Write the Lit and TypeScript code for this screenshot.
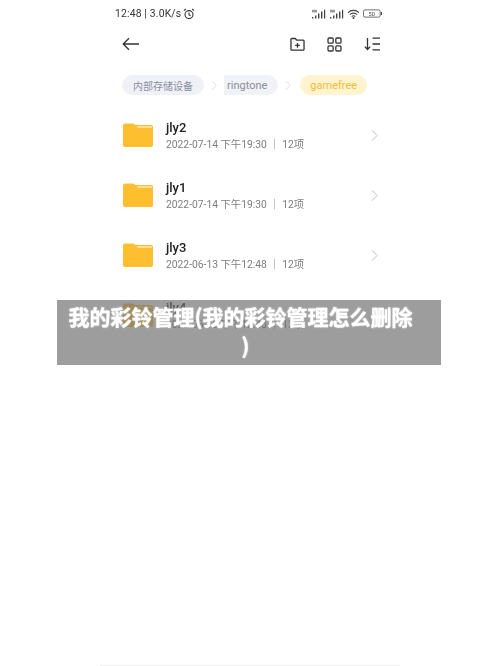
import { LitElement, html, css, svg } from "lit";
import { customElement } from "lit/decorators.js";

const rows = [
  { name: "jly2", meta: "2022-07-14 下午19:30 ｜ 12项" },
  { name: "jly1", meta: "2022-07-14 下午19:30 ｜ 12项" },
  { name: "jly3", meta: "2022-06-13 下午12:48 ｜ 12项" },
  { name: "jly4", meta: "2022-06-13 下午12:48 ｜ 12项" },
];

const folder = html`<svg class="folder" viewBox="0 0 30 24" width="30" height="24">
  <path fill="#fdbf2f" d="M0 2.5A2 2 0 0 1 2 .5h7.5c1.4 0 2 1.6 3.5 1.6H28a2 2 0 0 1 2 2V22a2 2 0 0 1-2 2H2a2 2 0 0 1-2-2Z"/>
  <path fill="#ffe6a8" d="M14.5 3.2H29v1.6H14.5Z"/>
</svg>`;

const chev = (cls: string, w: number, h: number) => html`<svg class=${cls} viewBox="0 0 8 14" width=${w} height=${h} fill="none" stroke="currentColor" stroke-width="1.1"><path d="M1 1l6 6-6 6"/></svg>`;

@customElement("app-root")
export class AppRoot extends LitElement {
  static styles = css`
    :host { display: block; width: 500px; height: 666px; position: relative; overflow: hidden; background: #fff; font-family: Roboto, "Noto Sans CJK SC", sans-serif; }
    .phone { width: 284px; height: 665px; margin: 0 auto; box-sizing: border-box; padding: 0 10px 0 7px; filter: blur(0.35px); }
    .status { height: 27px; display: flex; align-items: center; justify-content: space-between; color: #333; font-size: 10.4px; letter-spacing: 0.15px; }
    .status-left { display: flex; align-items: center; gap: 2px; }
    .status-right { display: flex; align-items: center; gap: 3px; margin-right: -1px; color: #444; }
    .toolbar { height: 34px; display: flex; align-items: center; justify-content: space-between; padding: 0 2px 0 7px; color: #333; }
    .tools { display: flex; align-items: center; gap: 22px; }
    .crumbs { margin-top: 14px; height: 20px; display: flex; align-items: center; padding-left: 7px; font-size: 11px; }
    .pill { height: 20px; display: flex; align-items: center; border-radius: 10px; background: #eff1f7; color: #8a8ea3; padding: 0 11px; font-size: 10px; }
    .pill.mid { border-radius: 0 10px 10px 0; padding: 0 11px 0 3px; background: #f0f2f7; color: #8b8e9b; font-size: 11px; }
    .pill.on { background: #fff4cf; color: #f2bd3a; padding: 0 10px; margin-left: 2px; font-size: 11px; }
    .sep { color: #d8d8de; margin: 0 7px; display: block; }
    .list { margin-top: 11px; padding-left: 8px; }
    .row { height: 60px; display: flex; align-items: center; box-sizing: border-box; padding-bottom: 2px; }
    .folder { flex: none; }
    .text { margin-left: 13px; flex: 1; padding-top: 1px; }
    .name { font-size: 13px; font-weight: 500; line-height: 15px; color: #222; }
    .meta { font-size: 10.3px; line-height: 13px; margin-top: 3px; color: #7d7d7d; white-space: nowrap; }
    .arrow { color: #bdbdbd; margin-right: 4px; flex: none; }
    .rule { position: absolute; left: 100px; width: 300px; bottom: 0; height: 1px; background: #eee; }
    .banner { position: absolute; left: 57px; top: 300px; width: 384px; height: 65px; box-sizing: border-box; background: rgba(110,110,110,0.68); padding: 2px 28px 0 11px; text-align: center; color: #fff; font-family: "Noto Sans CJK SC", sans-serif; font-weight: 700; font-size: 21px; line-height: 29px; text-shadow: 0 0 2px rgba(255,255,255,.7); -webkit-text-stroke: 0.3px #fff; }
    .tail { display: block; padding-left: 10px; }
    .line { display: block; white-space: nowrap; }
  `;

  render() {
    return html`
      <div class="phone">
        <div class="status">
          <div class="status-left">
            <span>12:48 | 3.0K/s</span>
            <svg viewBox="0 0 12 12" width="12" height="12" fill="none" stroke="#333" stroke-width="1.1"><circle cx="6" cy="6.6" r="4"/><path d="M6 4.4v2.4l1.6 1M1 2.6 2.8 1M11 2.6 9.2 1"/></svg>
          </div>
          <div class="status-right">
            ${[0, 1].map(() => html`<svg viewBox="0 0 15 10" width="15" height="10" fill="currentColor">
              <path d="M1 8h1.4v1.4H1ZM4 6.5h1.4v3H4ZM7 4.5h1.4v5H7ZM10 2.5h1.4v7H10ZM13 .8h1.2v8.7H13Z"/>
              <path d="M1 .8h5v2.6H1Z" opacity=".55"/>
            </svg>`)}
            <svg viewBox="0 0 14 11" width="13" height="10" fill="none" stroke="currentColor" stroke-width="1.2"><path d="M1 4a8.5 8.5 0 0 1 12 0M3 6.2a5.6 5.6 0 0 1 8 0M5 8.3a2.8 2.8 0 0 1 4 0"/><circle cx="7" cy="10" r=".5"/></svg>
            <svg viewBox="0 0 21 9" width="20" height="9" fill="none" stroke="currentColor" stroke-width=".8">
              <rect x=".5" y=".7" width="17.5" height="7.6" rx="1.6"/><path d="M19.3 3v3" stroke-width="1.2"/>
              ${svg`<text x="9.2" y="6.8" text-anchor="middle" font-size="6" fill="currentColor" stroke="none" font-family="Roboto">50</text>`}
            </svg>
          </div>
        </div>
        <div class="toolbar">
          <svg viewBox="0 0 17 14" width="17" height="14" fill="none" stroke="currentColor" stroke-width="1.3"><path d="M17 7H1.2M7 1.2 1.2 7 7 12.8"/></svg>
          <div class="tools">
            <svg viewBox="0 0 16 15" width="15" height="14" fill="none" stroke="currentColor" stroke-width="1.4"><path d="M1 2.6a1 1 0 0 1 1-1h3.6l1.6 1.8H14a1 1 0 0 1 1 1V13a1 1 0 0 1-1 1H2a1 1 0 0 1-1-1Z"/><path d="M8 6.4v5M5.5 8.9h5"/></svg>
            <svg viewBox="0 0 15 15" width="15" height="15" fill="none" stroke="currentColor" stroke-width="1.3"><rect x="1" y="1" width="5.2" height="5.2" rx="1.2"/><rect x="8.8" y="1" width="5.2" height="5.2" rx="1.2"/><rect x="1" y="8.8" width="5.2" height="5.2" rx="1.2"/><rect x="8.8" y="8.8" width="5.2" height="5.2" rx="1.2"/></svg>
            <svg viewBox="0 0 16 14" width="16" height="14" fill="none" stroke="currentColor" stroke-width="1.3"><path d="M3.5 1v11.5M.8 9.6l2.7 2.9 2.7-2.9M8.5 1.2H16M8.5 7H16M8.5 12.8H16"/></svg>
          </div>
        </div>
        <div class="crumbs">
          <span class="pill">内部存储设备</span>
          ${chev("sep", 6, 11)}
          <span class="pill mid">ringtone</span>
          ${chev("sep", 6, 11)}
          <span class="pill on">gamefree</span>
        </div>
        <div class="list">
          ${rows.map(r => html`<div class="row">
            ${folder}
            <div class="text"><div class="name">${r.name}</div><div class="meta">${r.meta}</div></div>
            ${chev("arrow", 7, 13)}
          </div>`)}
        </div>
      </div>
      <div class="rule"></div>
      <div class="banner"><span class="line">我的彩铃管理(我的彩铃管理怎么删除</span><span class="tail">)</span></div>
    `;
  }
}
